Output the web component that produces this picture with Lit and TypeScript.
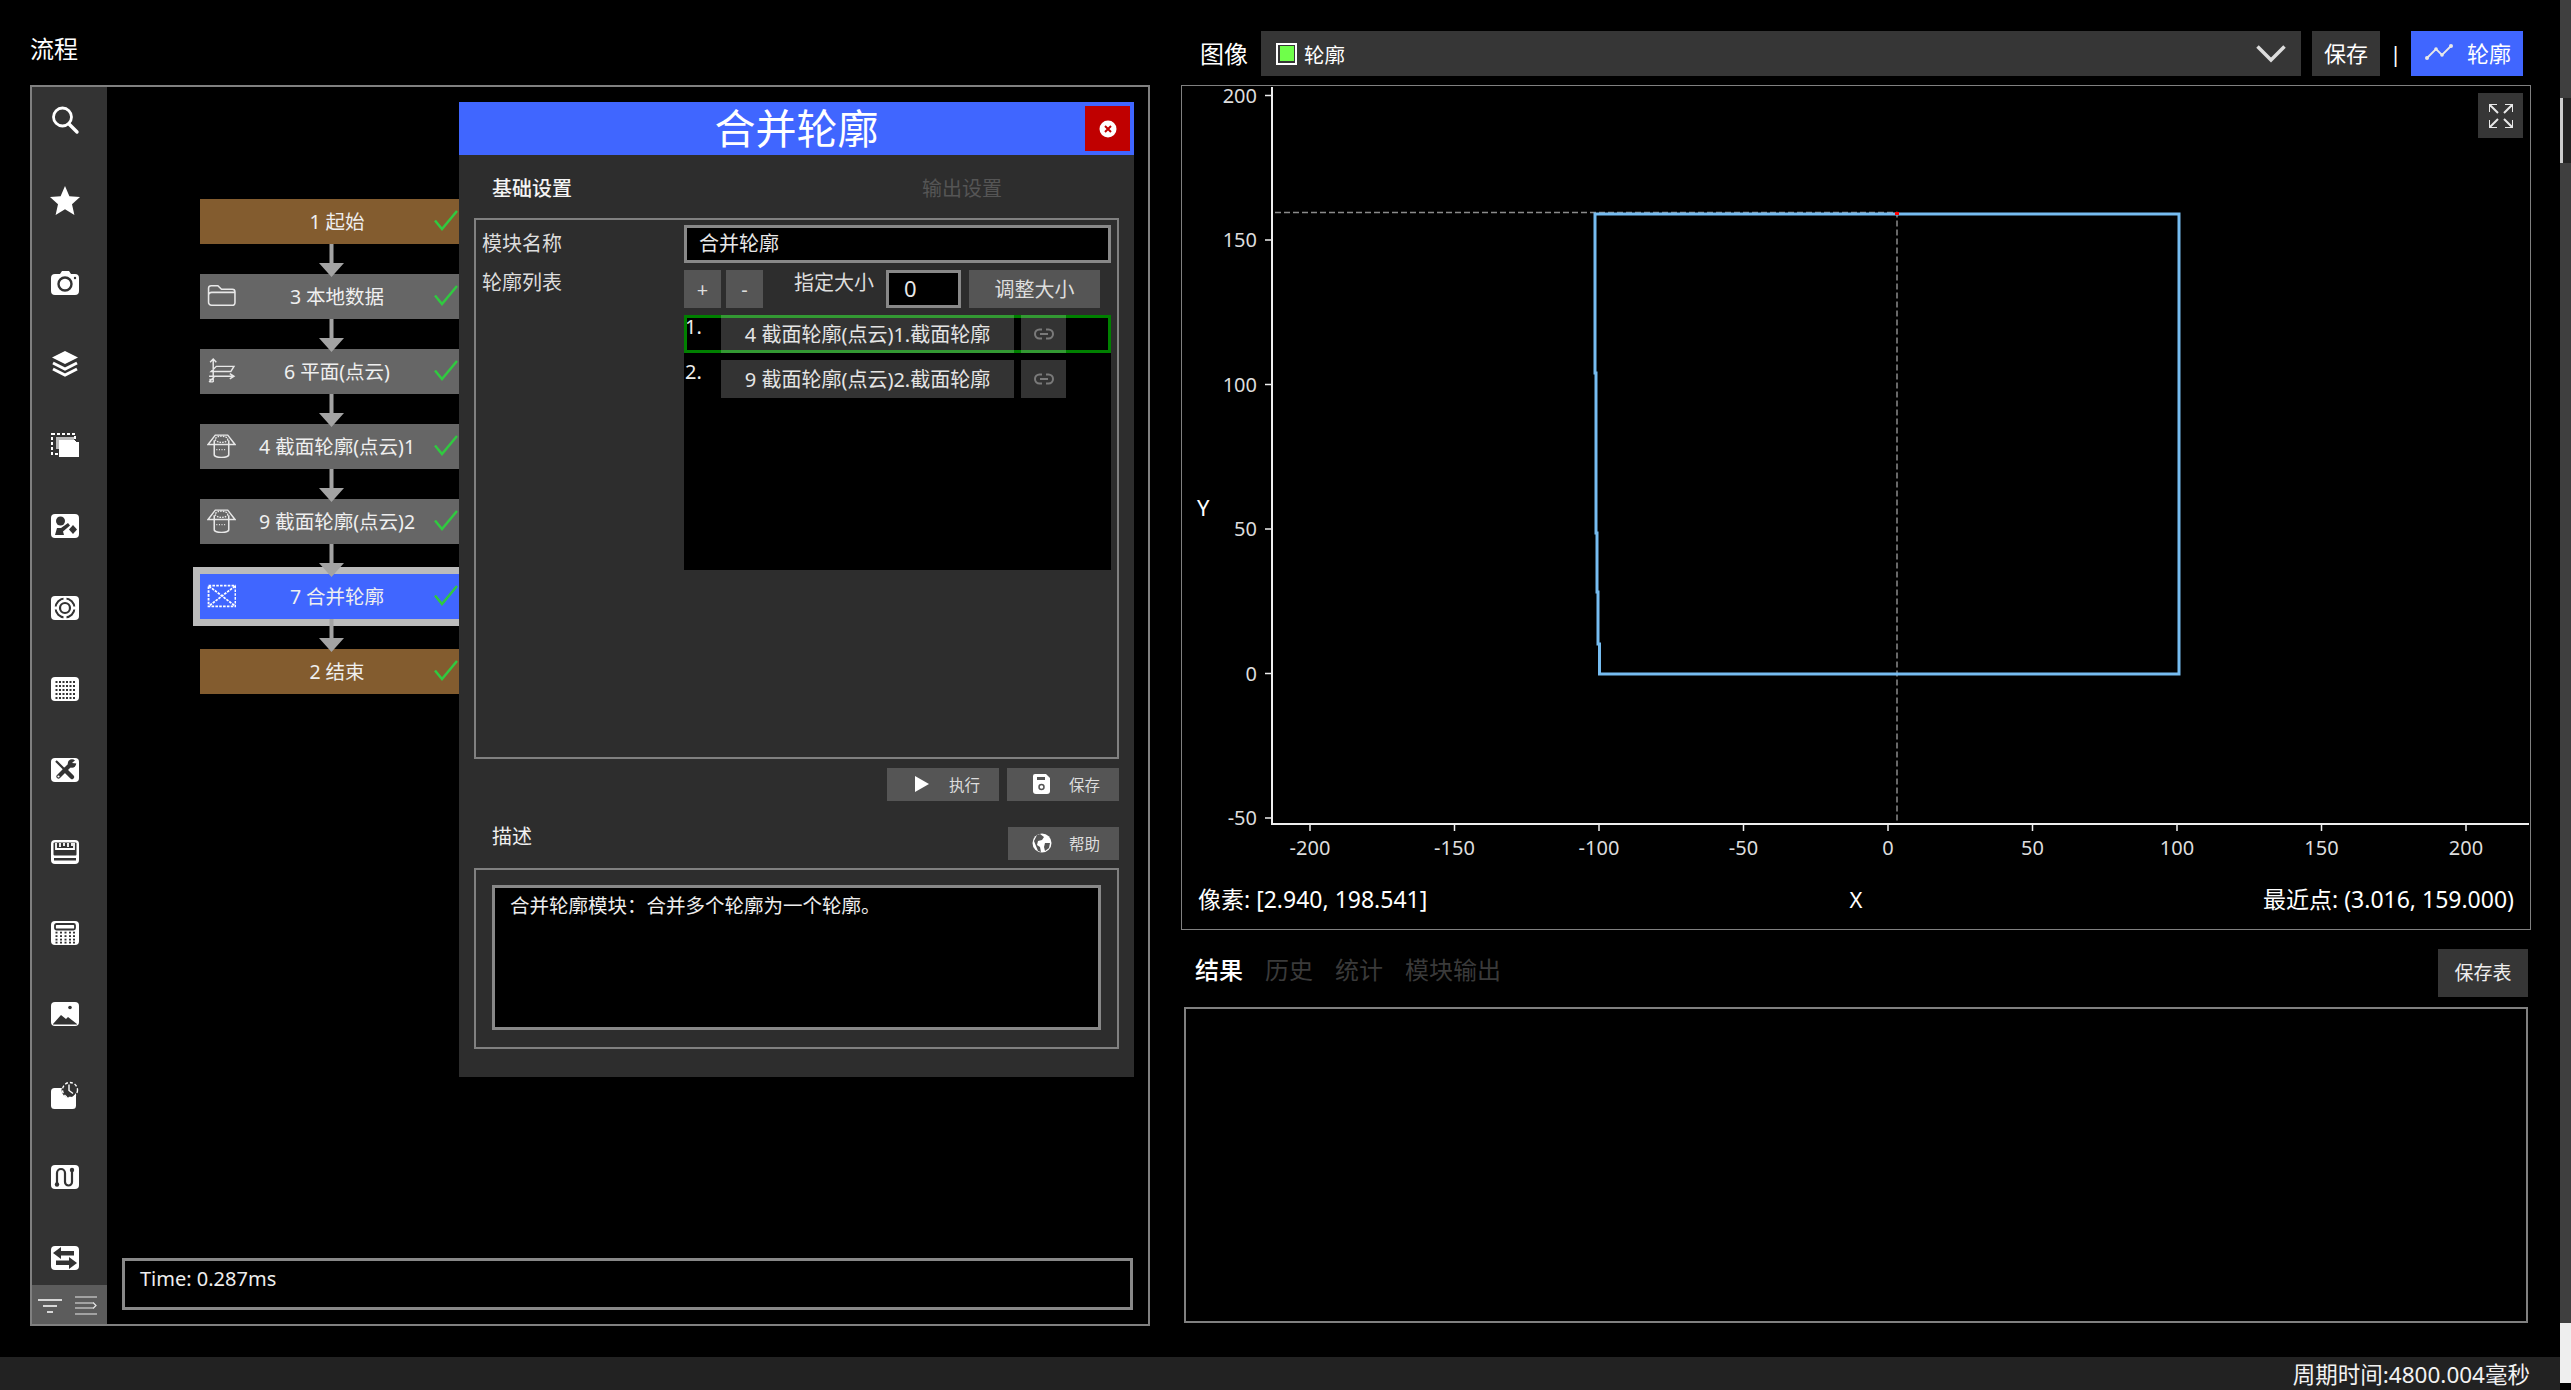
import { LitElement, html, css, svg } from "lit";
import { customElement } from "lit/decorators.js";

const W = "#fff";
const D = "#333";
const base = svg`<rect x="1" y="3" width="28" height="24" rx="4" fill="${W}"/>`;

const sideIcons = [
  svg`<circle cx="12.5" cy="12" r="9" fill="none" stroke="${W}" stroke-width="2.8"/><path d="M19 19l8 8" stroke="${W}" stroke-width="3.4" stroke-linecap="round"/>`,
  svg`<path d="M15 0l4.4 10.2 10.6.9-8 7.1 2.4 10.8L15 23.3 5.6 29 8 18.2 0 11.1l10.6-.9z" fill="${W}"/>`,
  svg`<path d="M5 6h5l2-3h7l2 3h4a4 4 0 0 1 4 4v13a4 4 0 0 1-4 4H5a4 4 0 0 1-4-4V10a4 4 0 0 1 4-4z" fill="${W}"/><circle cx="15" cy="16" r="6.5" fill="${W}" stroke="${D}" stroke-width="2.4"/><circle cx="25" cy="10" r="1.2" fill="${D}"/>`,
  svg`<path d="M15 2l13 6.5L15 15 2 8.5z" fill="${W}"/><path d="M3 14l12 6 12-6M3 20l12 6 12-6" fill="none" stroke="${W}" stroke-width="3"/>`,
  svg`<rect x="2" y="4" width="23" height="20" fill="none" stroke="${W}" stroke-width="2" stroke-dasharray="3 2"/><rect x="6" y="7" width="18" height="12" fill="#bbb"/><path d="M9 10h16v2h4v15H9z" fill="${W}"/>`,
  svg`${base}<circle cx="10.5" cy="10" r="4.5" fill="${D}"/><path d="M5 24l2-7 4 0 7-5 2 2.5-7 6 1 3.5z" fill="${D}"/><path d="M23 14l4 4.5-4 4.5-4-4.5z" fill="${D}"/>`,
  svg`${base}<circle cx="15" cy="15" r="9.5" fill="none" stroke="${D}" stroke-width="2"/><circle cx="15" cy="15" r="5" fill="${W}" stroke="${D}" stroke-width="2.2"/><path d="M15 3v6M15 21v6M1 15h6M23 15h6" stroke="${W}" stroke-width="3"/>`,
  svg`${base}${[8, 12, 16, 20, 24].flatMap((y) => [5.5, 9, 12.5, 16, 19.5, 23].map((x) => svg`<rect x="${x}" y="${y - 1}" width="2" height="2" fill="${D}"/>`))}`,
  svg`${base}<path d="M6 6l9 9" stroke="${D}" stroke-width="2.2"/><path d="M15 15l7 7" stroke="${D}" stroke-width="4.5" stroke-linecap="round"/><path d="M21 9L8.500 21.500" stroke="${D}" stroke-width="4.2" stroke-linecap="round"/><circle cx="22" cy="8.5" r="4.2" fill="${D}"/><path d="M22 8l4-3.500 1 4z" fill="${W}"/><circle cx="8.5" cy="21.5" r="1.1" fill="${W}"/>`,
  svg`${base}<rect x="3.5" y="5.5" width="23" height="13" rx="1" fill="${D}"/><path d="M6 6v6h18V6M10 6v4M14 6v3M18 6v4M22 6v3" fill="none" stroke="${W}" stroke-width="1.8"/><rect x="4" y="21" width="22" height="2.5" fill="${D}"/>`,
  svg`${base}<rect x="5" y="6" width="20" height="5.5" rx="1.5" fill="none" stroke="${D}" stroke-width="1.8"/>${[14.5, 18, 21.5, 24.5].flatMap((y) => [5.5, 10, 14.5, 19, 23].map((x) => svg`<rect x="${x}" y="${y - 0.8}" width="2" height="1.8" fill="${D}"/>`))}`,
  svg`${base}<circle cx="20" cy="8.5" r="1.8" fill="${D}"/><path d="M3 25l8-9 5 4 2-2 9 7v0.5H3z" fill="${D}"/><path d="M11 18l3 3-6 3z" fill="${D}"/>`,
  svg`<rect x="1" y="7" width="25" height="21" rx="3.5" fill="${W}"/><circle cx="19" cy="9" r="7.5" fill="${D}"/><path d="M19 3.5v6l4 3" fill="none" stroke="${W}" stroke-width="1.4"/><circle cx="20" cy="9" r="7.5" fill="none" stroke="${W}" stroke-width="1.4" stroke-dasharray="3 2"/>`,
  svg`${base}<path d="M7 22V11a4 4 0 0 1 8 0v9a3.5 3.5 0 0 0 7 0V9" fill="none" stroke="${D}" stroke-width="2.2"/><circle cx="7" cy="22.5" r="2.2" fill="${D}"/><circle cx="22" cy="8" r="2.2" fill="${D}"/>`,
  svg`${base}<path d="M3 10l8-6v4h13v4.5H11v3.5z" fill="${D}"/><path d="M27 20l-8 6v-4H6v-4.5h13V14z" fill="${D}"/>`,
];

const folderIcon = svg`<path d="M1.5 18V5a2.5 2.5 0 0 1 2.5-2.5h6.5L14 6h10.5A2.5 2.5 0 0 1 27 8.5V19a2.5 2.5 0 0 1-2.5 2.5h-20A3 3 0 0 1 1.5 18zM1.5 12a3 3 0 0 1 3-3h22" fill="none" stroke="#e8e8e8" stroke-width="1.5"/>`;
const planeIcon = svg`<path d="M6 1v22M3 4l3-3 3 3M2 23l5-5M3 20v3h3M2 17.5h24M22 15l4 2.5-4 2.5M4 13h19l3-5H9z" fill="none" stroke="#e8e8e8" stroke-width="1.4"/>`;
const sectionIcon = svg`<path d="M1 11L8 2h12l7 9z" fill="none" stroke="#e8e8e8" stroke-width="1.4"/><ellipse cx="14" cy="6" rx="6" ry="3" fill="none" stroke="#e8e8e8" stroke-width="1.3" stroke-dasharray="1.5 1"/><path d="M7 7v14a7 2.5 0 0 0 14 0V7" fill="none" stroke="#e8e8e8" stroke-width="1.5"/><path d="M9 16h10" stroke="#e8e8e8" stroke-width="1.2" stroke-dasharray="1 1.5"/>`;
const mergeIcon = svg`<rect x="1.5" y="2.5" width="26" height="20" fill="none" stroke="#fff" stroke-width="1.8" stroke-dasharray="2.5 1.2"/><path d="M2 3l25 19M27 3L2 22" fill="none" stroke="#fff" stroke-width="1.7" stroke-dasharray="2.5 1"/>`;

const nodes = [
  { n: "1 起始", kind: "term", icon: null },
  { n: "3 本地数据", kind: "plain", icon: folderIcon },
  { n: "6 平面(点云)", kind: "plain", icon: planeIcon },
  { n: "4 截面轮廓(点云)1", kind: "plain", icon: sectionIcon },
  { n: "9 截面轮廓(点云)2", kind: "plain", icon: sectionIcon },
  { n: "7 合并轮廓", kind: "sel", icon: mergeIcon },
  { n: "2 结束", kind: "term", icon: null },
];

const linkIcon = html`<svg class="link" viewBox="0 0 20 12"><path d="M8 1.5H5.5a4.5 4.5 0 0 0 0 9H8M12 1.5h2.5a4.5 4.5 0 0 1 0 9H12M6 6h8" fill="none" stroke="#7a7a7a" stroke-width="2"/></svg>`;

const xTicks = [-200, -150, -100, -50, 0, 50, 100, 150, 200];
const yTicks = [200, 150, 100, 50, 0, -50];
const X = (v: number) => 1888 + 2.89 * v;
const Y = (v: number) => 673.5 - 2.89 * v;

@customElement("app-root")
export class AppRoot extends LitElement {
  static styles = css`
    :host {
      display: block;
      width: 2571px;
      height: 1390px;
      overflow: hidden;
      background: #000;
      color: #fff;
      font-family: "Noto Sans", "Noto Sans CJK SC", sans-serif;
    }
    * { box-sizing: border-box; }
    .shell { display: flex; height: 1390px; }
    .content { width: 2560px; display: flex; flex-direction: column; }
    .main { height: 1357px; display: flex; padding-left: 30px; }
    .status {
      height: 33px; background: #222; display: flex; align-items: center;
      justify-content: flex-end; padding-right: 30px; font-size: 22.5px; color: #f2f2f2;
    }
    .scroll { width: 11px; display: flex; flex-direction: column; }
    .track { height: 1323px; background: #3f3f3f; padding-top: 98px; }
    .thumb { height: 65px; background: #222; border-left: 3px solid #ccc; }
    .light { height: 60px; background: #eee; }

    .left { width: 1120px; display: flex; flex-direction: column; }
    .title { height: 85px; padding-top: 31px; font-size: 24px; line-height: 36px; }
    .panel { height: 1241px; border: 2px solid #808080; display: flex; }
    .side { width: 75px; background: #333; display: flex; flex-direction: column; }
    .icons {
      flex: 1; display: flex; flex-direction: column; align-items: center;
      padding: 18px 9px 0 0; gap: 51.3px;
    }
    .icons svg { width: 30px; height: 30px; display: block; flex: none; }
    .side-foot {
      height: 39px; background: #5c5c5c; display: flex; align-items: center;
      justify-content: space-between; padding: 0 9px 0 6px;
    }
    .side-foot svg { width: 24px; height: 22px; display: block; }

    .canvas { flex: 1; position: relative; display: flex; flex-direction: column; }
    .flow { flex: 1; padding: 112px 0 0 93px; display: flex; flex-direction: column; }
    .node {
      width: 260px; height: 45px; flex: none; position: relative; display: flex;
      align-items: center; justify-content: center; padding: 0 0 3px 14px;
      font-size: 19.5px; color: #efefef;
    }
    .node.term { background: #835c2f; }
    .node.plain { background: #666; }
    .node.sel { background: #4066ff; outline: 7.5px solid #bbb; }
    .node .nicon { position: absolute; left: 7px; top: 9px; width: 29px; height: 25px; }
    .node .check { position: absolute; left: 234px; top: 10px; width: 24px; height: 22px; }
    .conn { height: 30px; flex: none; position: relative; z-index: 1; padding-left: 118.5px; }
    .conn svg { width: 25px; height: 30px; display: block; overflow: visible; }
    .timebox {
      margin: 0 15px 14px 15px; height: 52px; border: 3px solid #888; padding: 2px 15px;
      font-size: 20px; line-height: 32px; color: #eee; flex: none;
    }

    .dialog {
      position: absolute; left: 352px; top: 15px; width: 675px; height: 975px;
      background: #2d2d2d; z-index: 2; display: flex; flex-direction: column;
    }
    .dhead {
      height: 53px; background: #4066ff; position: relative; display: flex;
      align-items: center; justify-content: center; font-size: 41px; line-height: 53px; flex: none;
    }
    .close {
      position: absolute; right: 4px; top: 4px; width: 45px; height: 45px; background: #c00000;
      display: flex; align-items: center; justify-content: center;
    }
    .close svg { width: 18px; height: 18px; display: block; }
    .dtabs {
      height: 63px; display: grid; grid-template-columns: 430px 1fr; padding: 2px 0 0 33px;
      align-items: center; font-size: 20px; flex: none;
    }
    .dtabs span:first-child { font-weight: 500; color: #f4f4f4; }
    .dtabs span:last-child { color: #555; }
    .group { margin: 0 15px; border: 2px solid #808080; flex: none; }
    .g1 { height: 541px; padding: 5px 4px 0 6px; display: grid; grid-template-columns: 202px 427px; grid-auto-rows: min-content; row-gap: 7px; }
    .lab { font-size: 20px; line-height: 38px; color: #ddd; }
    .lab.list-lab { line-height: 26px; }
    .input { border: 3px solid #888; background: #000; height: 38px; font-size: 20px; display: flex; align-items: center; color: #e8e8e8; padding-bottom: 3px; }
    .g1 .input.name { padding-left: 12px; }
    .ctl { display: flex; align-items: center; height: 38px; }
    .btn { background: #555; display: flex; align-items: center; justify-content: center; color: #ddd; flex: none; }
    .sq { width: 37px; height: 38px; font-size: 20px; margin-right: 5px; }
    .ctl .size { margin-left: 26px; font-size: 20px; line-height: 26px; color: #ddd; width: 78px; white-space: nowrap; align-self: flex-start; }
    .ctl .input { width: 75px; margin-left: 14px; padding: 0 0 2px 15px; font-size: 22px; }
    .adj { width: 131px; height: 38px; margin-left: 8px; font-size: 20px; padding-bottom: 2px; }
    .lspan { grid-column: 2; }
    .list { height: 255px; background: #000; display: flex; flex-direction: column; gap: 7px; }
    .row { height: 38px; display: flex; position: relative; }
    .row.on::before { content: ""; position: absolute; inset: 0; border: 3px solid #008000; }
    .num { width: 37px; font-size: 20px; line-height: 24px; padding-left: 1px; color: #eee; }
    .item {
      width: 293px; height: 38px; background: rgba(255, 255, 255, 0.2); position: relative;
      display: flex; align-items: center; justify-content: center; font-size: 20px; color: #e4e4e4; padding-bottom: 2px;
    }
    .lnk {
      width: 45px; height: 38px; margin-left: 7px; background: rgba(255, 255, 255, 0.2); position: relative;
      display: flex; align-items: center; justify-content: center;
    }
    .link { width: 20px; height: 12px; display: block; }
    .actions { display: flex; justify-content: flex-end; gap: 8px; padding-right: 15px; margin-top: 9px; flex: none; }
    .act { width: 112px; height: 33px; background: #555; display: flex; align-items: center; padding: 0 0 1px 25px; font-size: 15.5px; color: #ddd; }
    .act svg { width: 20px; height: 20px; display: block; margin-right: 17px; flex: none; }
    .act.help { width: 111px; padding-left: 24px; }
    .descrow { display: flex; justify-content: space-between; margin-top: 26px; padding: 0 15px 0 33px; flex: none; height: 32px; }
    .desc { font-size: 20px; line-height: 20px; color: #f0f0f0; }
    .g2 { height: 181px; margin-top: 9px; padding: 15px 16px; }
    .ta { height: 145px; border: 3px solid #888; background: #000; padding: 6px 15px; font-size: 19.5px; line-height: 24px; color: #eee; }

    .right { width: 1350px; margin-left: 31px; display: flex; flex-direction: column; }
    .toolbar { margin-top: 31px; height: 45px; display: flex; padding: 0 8px 0 19px; align-items: stretch; flex: none; }
    .tlabel { width: 49px; font-size: 24px; line-height: 45px; margin-right: 12px; }
    .combo {
      width: 1040px; background: #363636; display: flex; align-items: center; padding: 0 15px;
      font-size: 20.5px; position: relative;
    }
    .swatch { width: 21px; height: 22px; border: 2px solid #fff; padding: 1.5px; background: #6fff4a content-box; margin-right: 7px; flex: none; }
    .chev { width: 30px; height: 18px; margin-left: auto; display: block; }
    .tbtn { background: #363636; width: 68px; margin-left: 11px; display: flex; align-items: center; justify-content: center; font-size: 22px; padding-bottom: 3px; }
    .sep { width: 31px; text-align: center; line-height: 45px; font-size: 22px; }
    .blue { width: 112px; background: #4066ff; display: flex; align-items: center; padding: 0 0 3px 14px; font-size: 22px; }
    .blue svg { width: 28px; height: 16px; margin-right: 14px; display: block; flex: none; }
    .chart { height: 845px; width: 1350px; margin-top: 9px; border: 1px solid #808080; position: relative; flex: none; }
    .chart > svg { display: block; width: 1348px; height: 843px; overflow: visible; }
    .expand {
      position: absolute; right: 7px; top: 7px; width: 45px; height: 45px; background: #363636;
      display: flex; align-items: center; justify-content: center;
    }
    .expand svg { width: 24px; height: 24px; display: block; }
    .ctext { font-family: "Noto Sans", "Noto Sans CJK SC", sans-serif; }
    .tabs { display: flex; align-items: center; height: 48px; margin-top: 19px; padding: 0 3px 0 14px; gap: 22px; font-size: 24px; flex: none; color: #3a3a3a; }
    .tabs span { margin-bottom: 9px; }
    .tabs .act0 { color: #fff; font-weight: 500; }
    .savetbl { margin-left: auto; width: 90px; height: 48px; background: #363636; display: flex; align-items: center; justify-content: center; font-size: 19px; color: #eee; padding-bottom: 2px; }
    .table { height: 316px; margin: 10px 3px 0; border: 2px solid #808080; flex: none; }
  `;

  render() {
    return html`<div class="shell">
      <div class="content">
        <div class="main">
          <section class="left">
            <div class="title">流程</div>
            <div class="panel">
              <aside class="side">
                <div class="icons">${sideIcons.map((i) => html`<svg viewBox="0 0 30 30">${i}</svg>`)}</div>
                <div class="side-foot">
                  <svg viewBox="0 0 24 22"><path d="M0 6h24M5 12h14M9 18h6" stroke="#fff" stroke-width="1.6"/></svg>
                  <svg viewBox="0 0 24 22"><path d="M1 3h22M1 9h18M1 14h18M1 20h22M19 8.5l3 3-3 3" fill="none" stroke="#e8e8e8" stroke-width="1.2"/></svg>
                </div>
              </aside>
              <div class="canvas">
                <div class="flow">
                  ${nodes.map(
                    (n, i) => html`
                      <div class="node ${n.kind}">
                        ${n.icon ? html`<svg class="nicon" viewBox="0 0 28 24">${n.icon}</svg>` : ""}
                        <span>${n.n}</span>
                        <svg class="check" viewBox="0 0 24 22"><path d="M1 11.5l7 8.5L23 2" fill="none" stroke="#30c940" stroke-width="2.5"/></svg>
                      </div>
                      ${i < nodes.length - 1
                        ? html`<div class="conn"><svg viewBox="0 0 25 30"><path d="M10.5 0h4v20h-4z M0 19h25L12.5 33z" fill="#a3a3a3"/></svg></div>`
                        : ""}
                    `
                  )}
                </div>
                <div class="timebox">Time: 0.287ms</div>
                ${this.renderDialog()}
              </div>
            </div>
          </section>
          <section class="right">
            <div class="toolbar">
              <div class="tlabel">图像</div>
              <div class="combo">
                <span class="swatch"></span><span>轮廓</span>
                <svg class="chev" viewBox="0 0 30 18"><path d="M1.5 1.5L15 15 28.5 1.5" fill="none" stroke="#ddd" stroke-width="3.5"/></svg>
              </div>
              <div class="tbtn">保存</div>
              <div class="sep">|</div>
              <div class="blue">
                <svg viewBox="0 0 28 16"><path d="M2 14l9-9 6 6 9-9" fill="none" stroke="#e8e8e8" stroke-width="1.8"/><circle cx="2" cy="14" r="2" fill="#e8e8e8"/><circle cx="11" cy="5" r="1.8" fill="#e8e8e8"/><circle cx="17" cy="11" r="1.8" fill="#e8e8e8"/><circle cx="26" cy="2" r="2" fill="#e8e8e8"/></svg>
                <span>轮廓</span>
              </div>
            </div>
            <div class="chart">
              ${this.renderChart()}
              <div class="expand">
                <svg viewBox="0 0 24 24"><path d="M0 8V0h8M0 0l9 9M24 8V0h-8M24 0l-9 9M0 16v8h8M0 24l9-9M24 16v8h-8M24 24l-9-9" fill="none" stroke="#e8e8e8" stroke-width="2"/></svg>
              </div>
            </div>
            <div class="tabs">
              <span class="act0">结果</span><span>历史</span><span>统计</span><span>模块输出</span>
              <div class="savetbl">保存表</div>
            </div>
            <div class="table"></div>
          </section>
        </div>
        <footer class="status">周期时间:4800.004毫秒</footer>
      </div>
      <div class="scroll">
        <div class="track"><div class="thumb"></div></div>
        <div class="light"></div>
      </div>
    </div>`;
  }

  renderDialog() {
    return html`<div class="dialog">
      <div class="dhead">
        合并轮廓
        <div class="close"><svg viewBox="0 0 18 18"><circle cx="9" cy="9" r="8.5" fill="#fff"/><path d="M6 6l6 6M12 6l-6 6" stroke="#c00000" stroke-width="2"/></svg></div>
      </div>
      <div class="dtabs"><span>基础设置</span><span>输出设置</span></div>
      <div class="group g1">
        <div class="lab">模块名称</div>
        <div class="input name">合并轮廓</div>
        <div class="lab list-lab">轮廓列表</div>
        <div class="ctl">
          <div class="btn sq">+</div>
          <div class="btn sq">-</div>
          <div class="size">指定大小</div>
          <div class="input">0</div>
          <div class="btn adj">调整大小</div>
        </div>
        <div class="list lspan">
          <div class="row on">
            <div class="num">1.</div>
            <div class="item">4 截面轮廓(点云)1.截面轮廓</div>
            <div class="lnk">${linkIcon}</div>
          </div>
          <div class="row">
            <div class="num">2.</div>
            <div class="item">9 截面轮廓(点云)2.截面轮廓</div>
            <div class="lnk">${linkIcon}</div>
          </div>
        </div>
      </div>
      <div class="actions">
        <div class="act"><svg viewBox="0 0 20 20"><path d="M3 2l14 8-14 8z" fill="#fff"/></svg>执行</div>
        <div class="act"><svg viewBox="0 0 20 20"><path d="M3 0h11l4 4v13a3 3 0 0 1-3 3H4a3 3 0 0 1-3-3V2a2 2 0 0 1 2-2z" fill="#fff"/><rect x="5" y="3" width="8" height="3" fill="#555"/><circle cx="9.5" cy="13" r="2.5" fill="none" stroke="#555" stroke-width="1.5"/></svg>保存</div>
      </div>
      <div class="descrow">
        <div class="desc">描述</div>
        <div class="act help"><svg viewBox="0 0 20 20"><circle cx="10" cy="10" r="9.5" fill="#fff"/><path d="M8 1l4 3-2 3-4 1-1 4 3 2 1 5-3-1-2-5-2-5 3-6zM13 10l5 0-1 5-4 3-1-4z" fill="#555"/></svg>帮助</div>
      </div>
      <div class="group g2"><div class="ta">合并轮廓模块：合并多个轮廓为一个轮廓。</div></div>
    </div>`;
  }

  renderChart() {
    return html`<svg viewBox="1182 86 1348 843" class="ctext">
      <path d="M1272 87V824H2529" fill="none" stroke="#eee" stroke-width="2"/>
      ${yTicks.map(
        (v) => svg`<path d="M1265 ${Y(v)}h7" stroke="#eee" stroke-width="1.5"/><text x="1257" y="${Y(v) + 7}" text-anchor="end" font-size="20" fill="#ddd">${v}</text>`
      )}
      ${xTicks.map(
        (v) => svg`<path d="M${X(v)} 824v7" stroke="#eee" stroke-width="1.5"/><text x="${X(v)}" y="855" text-anchor="middle" font-size="20" fill="#ddd">${v}</text>`
      )}
      <path d="M1275 212.5H1897V822" fill="none" stroke="#8a8a8a" stroke-width="1.5" stroke-dasharray="6 3"/>
      <path d="M1595 214V373H1596V533H1597V592H1598V644H1599.5V674H2179V214Z" fill="none" stroke="#76bcf0" stroke-width="3"/>
      <rect x="1895" y="212" width="4" height="3" fill="#f00"/>
      <text x="1197" y="516" font-size="22" fill="#fff">Y</text>
      <text x="1856" y="908" text-anchor="middle" font-size="22" fill="#fff">X</text>
      <text x="1198" y="908" font-size="23" fill="#fff">像素: [2.940, 198.541]</text>
      <text x="2514" y="908" text-anchor="end" font-size="23" fill="#fff">最近点: (3.016, 159.000)</text>
    </svg>`;
  }
}
